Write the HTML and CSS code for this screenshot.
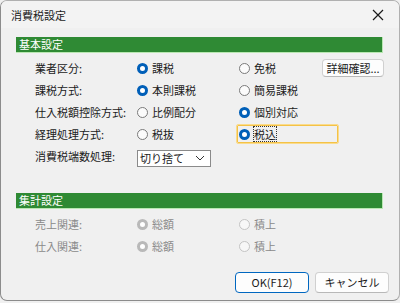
FILE: index.html
```html
<!DOCTYPE html>
<html lang="ja">
<head>
<meta charset="utf-8">
<link rel="stylesheet" href="styles.css">
</head>
<body>
<div class="window">
  <div class="titlebar">
    <span class="title">消費税設定</span>
    <svg class="close" width="12" height="12" viewBox="0 0 12 12"><path d="M1 1 L11 11 M11 1 L1 11" stroke="#1a1a1a" stroke-width="1.2" fill="none"/></svg>
  </div>
  <div class="content">
    <div class="section-head">基本設定</div>
    <div class="grid">
      <div class="label">業者区分:</div>
      <div class="opt"><span class="radio on"></span>課税</div>
      <div class="opt two"><span class="radio"></span>免税<button class="btn small">詳細確認...</button></div>

      <div class="label">課税方式:</div>
      <div class="opt"><span class="radio on"></span>本則課税</div>
      <div class="opt"><span class="radio"></span>簡易課税</div>

      <div class="label">仕入税額控除方式:</div>
      <div class="opt"><span class="radio"></span>比例配分</div>
      <div class="opt"><span class="radio on"></span>個別対応</div>

      <div class="label">経理処理方式:</div>
      <div class="opt"><span class="radio"></span>税抜</div>
      <div class="opt"><span class="focusbox"><span class="radio on"></span><span class="dotted">税込</span></span></div>

      <div class="label">消費税端数処理:</div>
      <div class="opt"><div class="select"><span>切り捨て</span><svg width="10" height="6" viewBox="0 0 10 6"><path d="M1 1 L5 5 L9 1" stroke="#333" stroke-width="1" fill="none"/></svg></div></div>
      <div class="opt"></div>
    </div>

    <div class="section-head second">集計設定</div>
    <div class="grid disabled">
      <div class="label">売上関連:</div>
      <div class="opt"><span class="radio on"></span>総額</div>
      <div class="opt"><span class="radio"></span>積上</div>

      <div class="label">仕入関連:</div>
      <div class="opt"><span class="radio on"></span>総額</div>
      <div class="opt"><span class="radio"></span>積上</div>
    </div>

    <div class="buttons">
      <button class="btn big default">OK(F12)</button>
      <button class="btn big">キャンセル</button>
    </div>
  </div>
</div>
</body>
</html>
```
FILE: styles.css
```css
html, body {
  margin: 0;
  padding: 0;
  background: #f0f0f0;
}
body {
  font-family: "Noto Sans CJK JP", "Noto Sans", sans-serif;
  font-size: 11px;
  color: #1b1b1b;
}
.window {
  width: 400px;
  height: 301px;
  box-sizing: border-box;
  border: 1px solid #8c8c8c;
  border-top-color: #b0b0b0;
  border-right-color: #b0b0b0;
  border-radius: 7px;
  background: #f0f0f0;
  overflow: hidden;
}
.titlebar {
  height: 27px;
  display: flex;
  align-items: center;
  justify-content: space-between;
  padding: 0 15px 0 10px;
  background: #f3f3f3;
}
.title {
  font-size: 11px;
  line-height: 12px;
}
.close {
  display: block;
}
.content {
  padding: 9px 16px 0 15px;
}
.section-head {
  height: 16px;
  box-sizing: border-box;
  background: #2f8a34;
  border-right: 1px solid #b9e8b2;
  border-bottom: 1px solid #b9e8b2;
  color: #fff;
  font-size: 11px;
  line-height: 15px;
  padding-left: 3px;
}
.section-head.second {
  margin-top: 26px;
}
.grid {
  display: grid;
  grid-template-columns: 102px 102px 1fr;
  grid-auto-rows: 22px;
  padding: 4px 0 0 19px;
}
.label, .opt {
  display: flex;
  align-items: center;
  white-space: nowrap;
}
.radio {
  width: 11px;
  height: 11px;
  box-sizing: border-box;
  border-radius: 50%;
  border: 1px solid #7a7a7a;
  background: #fbfbfb;
  margin-right: 4px;
  flex: none;
}
.radio.on {
  border: 3px solid #005fb8;
  background: #fff;
}
.disabled {
  color: #8a8a8a;
}
.disabled .radio {
  border-color: #c4c4c4;
  background: #f7f7f7;
}
.disabled .radio.on {
  border: 3px solid #b9b9b9;
  background: #fff;
}
.two {
  position: relative;
}
.btn {
  font-family: "Noto Sans CJK JP", "Noto Sans", sans-serif;
  font-size: 11px;
  color: #1b1b1b;
  background: #fdfdfd;
  border: 1px solid #d0d0d0;
  border-bottom-color: #b8b8b8;
  border-radius: 4px;
  padding: 0;
  line-height: 1;
}
.btn.small {
  position: absolute;
  left: 83px;
  top: 2px;
  width: 62px;
  height: 18px;
}
.focusbox {
  display: flex;
  align-items: center;
  width: 101px;
  height: 18px;
  box-sizing: border-box;
  margin-left: -2px;
  padding-left: 1px;
  border: 1px solid #f4c246;
  outline: 1px solid #fadb8c;
  border-radius: 1px;
}
.dotted {
  outline: 1px dotted #333;
  line-height: 14px;
}
.select {
  width: 74px;
  height: 17px;
  box-sizing: border-box;
  background: #fff;
  border: 1px solid #8a8a8a;
  display: flex;
  align-items: center;
  justify-content: space-between;
  padding: 0 5px 0 2px;
  margin-top: 4px;
}
.buttons {
  display: flex;
  justify-content: flex-end;
  gap: 6px;
  margin-top: 15px;
  margin-right: -6px;
}
.btn.big {
  width: 74px;
  height: 21px;
}
.btn.default {
  border: 1px solid #0067c0;
}
```
